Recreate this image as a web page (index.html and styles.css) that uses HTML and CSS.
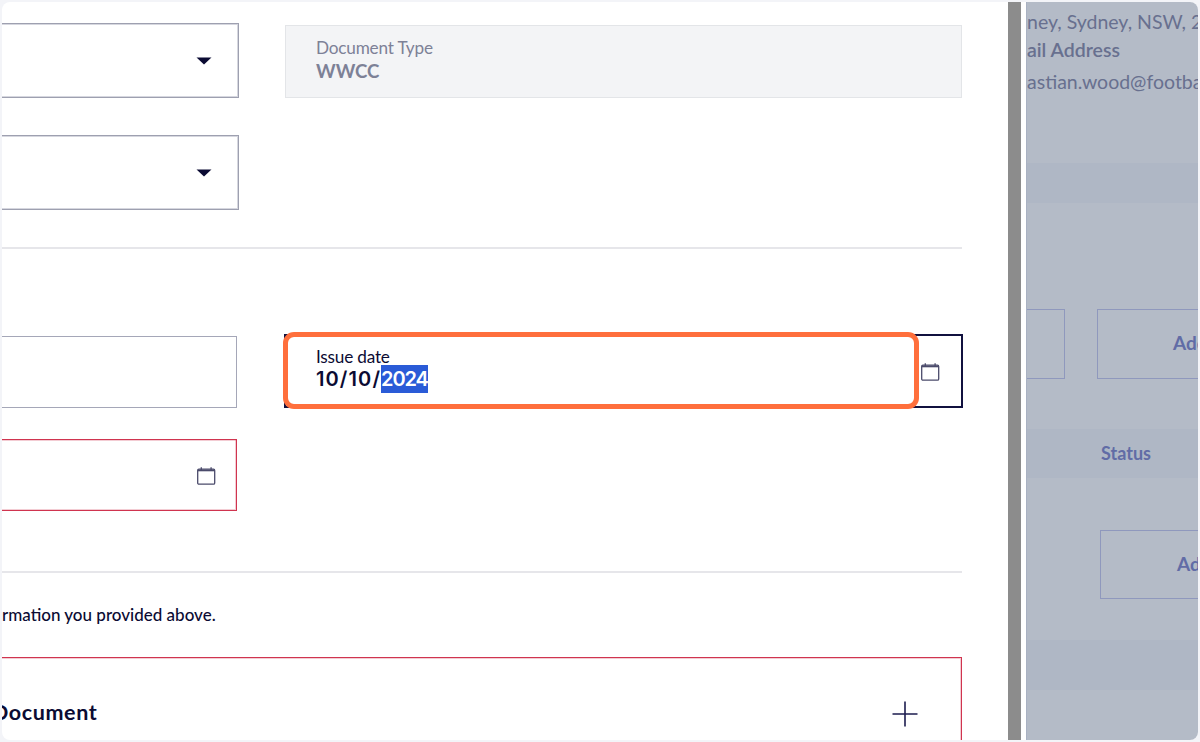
FILE: index.html
```html
<!DOCTYPE html>
<html lang="en">
<head>
<meta charset="utf-8">
<title>Document form</title>
<link rel="stylesheet" href="styles.css">
</head>
<body>
<div class="window">
  <main class="main">
    <section class="grid grid-top">
      <div class="field select">
        <svg class="caret" width="16" height="8" viewBox="0 0 16 8"><path d="M0.5 0.5H15.5L8 7.5Z" fill="#0b0b33"/></svg>
      </div>
      <div class="field readonly">
        <span class="label">Document Type</span>
        <span class="value">WWCC</span>
      </div>
      <div class="field select second">
        <svg class="caret" width="16" height="8" viewBox="0 0 16 8"><path d="M0.5 0.5H15.5L8 7.5Z" fill="#0b0b33"/></svg>
      </div>
    </section>
    <hr class="rule rule-one">
    <section class="grid grid-dates">
      <div class="field plain"></div>
      <div class="field focused">
        <div class="stack">
          <span class="label dark">Issue date</span>
          <span class="date">10/10/<mark class="sel">2024</mark></span>
        </div>
        <svg class="cal" width="20" height="20" viewBox="0 0 20 20" fill="none" stroke="#4b4b6b" stroke-width="1.3"><rect x="1.7" y="3.2" width="17" height="15" rx="1.2"/><path d="M1.7 4.4H18.7" stroke-width="1.8"/><path d="M5.3 1.2V4.4M15.1 1.2V4.4"/></svg>
        <div class="highlight"></div>
      </div>
      <div class="field error">
        <svg class="cal" width="20" height="20" viewBox="0 0 20 20" fill="none" stroke="#4b4b6b" stroke-width="1.3"><rect x="1.7" y="3.2" width="17" height="15" rx="1.2"/><path d="M1.7 4.4H18.7" stroke-width="1.8"/><path d="M5.3 1.2V4.4M15.1 1.2V4.4"/></svg>
      </div>
    </section>
    <hr class="rule rule-two">
    <p class="note">rmation you provided above.</p>
    <section class="upload">
      <span class="upload-title">Document</span>
      <svg class="plus" width="28" height="28" viewBox="0 0 28 28" stroke="#1d1d4f" stroke-width="1.6"><path d="M14 1.5V26.5M1.5 14H26.5"/></svg>
    </section>
  </main>
  <div class="gutter"><div class="thumb"></div></div>
  <aside class="aside">
    <div class="address">ney, Sydney, NSW, 2000</div>
    <div class="addr-label">ail Address</div>
    <div class="email">astian.wood@football.com</div>
    <div class="band band-top"></div>
    <div class="btn-row">
      <div class="ghost ghost-left"></div>
      <div class="ghost ghost-right">Add</div>
    </div>
    <div class="band-head"><span class="status">Status</span></div>
    <div class="ghost ghost-low">Add</div>
    <div class="band band-low"></div>
  </aside>
</div>
</body>
</html>
```
FILE: styles.css
```css
* { box-sizing: border-box; }
html, body { margin: 0; height: 100%; }
body {
  background: #f3f4f8;
  padding: 2px;
  font-family: "Lato", "Liberation Sans", sans-serif;
  color: #0b0b33;
  overflow: hidden;
}
.window {
  display: flex;
  height: 738px;
  background: #fff;
  border-radius: 8px;
  overflow: hidden;
}
.main {
  width: 1004px;
  flex: none;
  padding-right: 44px;
  overflow: hidden;
}
.grid {
  display: grid;
  grid-template-columns: 237px 1fr;
  column-gap: 46px;
}
.grid-top { padding-top: 21px; }
.grid-dates { padding-top: 87px; row-gap: 31px; }
.field {
  position: relative;
  display: flex;
  align-items: center;
  height: 75px;
  border: 1px solid #a5a7b8;
  border-left: 0;
}
.select {
  justify-content: flex-end;
  padding-right: 26px;
  border-color: #9ea0b0;
  box-shadow: inset -1px -1px 0 #d6d7df, inset 0 1px 0 #d6d7df;
}
.second { margin-top: 37px; }
.readonly {
  flex-direction: column;
  align-items: flex-start;
  justify-content: flex-start;
  height: 73px;
  margin-top: 2px;
  padding: 12px 0 0 30px;
  background: #f3f4f6;
  border: 1px solid #e3e5e8;
}
.label { font-size: 17.2px; line-height: 19px; letter-spacing: -0.2px; color: #7d8197; }
.label.dark { color: #0b0b33; line-height: 16px; }
.value { margin-top: 2px; font-size: 18.7px; line-height: 24px; font-weight: 700; color: #7d8197; }
.rule { height: 2px; margin: 0; border: 0; background: #e6e6ea; }
.rule-one { margin-top: 37px; }
.rule-two { margin-top: 60px; }
.plain { height: 72px; width: 235px; }
.focused {
  height: 74px;
  padding: 0 21px 0 30px;
  justify-content: space-between;
  border: 2px solid #11113f;
  margin: -2px -1px 0;
}
.stack { display: flex; flex-direction: column; margin-top: -2px; }
.date {
  margin-top: 2px;
  font-size: 20px;
  line-height: 24px;
  font-weight: 600;
  font-family: "Inter", "Liberation Sans", sans-serif;
  letter-spacing: 1.1px;
  color: #0b0b33;
}
.sel {
  padding: 2px 0;
  background: #2a5bd7;
  color: #fff;
  letter-spacing: -1.1px;
}
.highlight {
  position: absolute;
  left: -3px;
  top: -4px;
  width: 636px;
  height: 77px;
  border: 5px solid #ff6f3c;
  border-radius: 11px;
}
.error {
  height: 72px;
  width: 235px;
  justify-content: flex-end;
  padding-right: 20px;
  border-color: #d0344f;
  box-shadow: inset -1px -1px 0 rgba(208, 52, 79, 0.25), inset 0 1px 0 rgba(208, 52, 79, 0.25);
}
.cal { flex: none; margin-top: 1px; }
.note {
  margin: 31px 0 0;
  font-size: 17px;
  line-height: 22px;
  font-weight: 500;
  color: #0b0b33;
}
.upload {
  display: flex;
  justify-content: space-between;
  align-items: center;
  height: 110px;
  margin-top: 31px;
  padding: 0 42px 0 0;
  border: 1px solid #d0344f;
  border-left: 0;
  border-bottom: 0;
  box-shadow: inset -1px 1px 0 rgba(208, 52, 79, 0.25);
}
.upload-title { margin: 0 0 2px -10px; font-size: 21.5px; letter-spacing: 0.6px; font-weight: 700; }
.plus { margin-top: 2px; }
.gutter { width: 20px; flex: none; padding: 0 5px 0 2px; background: #fff; }
.thumb { height: 100%; background: #8c8c8c; }
.aside {
  flex: 1;
  min-width: 0;
  background: #b4bbc7;
  border-left: 1px solid #a9b1c2;
  overflow: hidden;
  white-space: nowrap;
  color: #68708f;
}
.address { padding-top: 8px; font-size: 19.5px; line-height: 24px; }
.addr-label { margin-top: 4px; font-size: 19.5px; line-height: 24px; font-weight: 600; }
.email { margin-top: 8px; font-size: 19.5px; line-height: 24px; }
.band { background: #afb7c5; }
.band-top { height: 40px; margin-top: 69px; }
.btn-row { display: flex; margin-top: 106px; }
.ghost {
  flex: none;
  height: 70px;
  border: 1px solid #8f98bd;
  font-size: 19px;
  font-weight: 700;
  color: #616ca6;
}
.ghost-left { width: 38px; border-left: 0; }
.ghost-right { width: 120px; margin-left: 32px; padding: 21px 0 0 75px; }
.band-head {
  height: 49px;
  margin-top: 50px;
  padding: 13px 0 0 74px;
  background: #afb7c5;
}
.status { font-size: 18px; font-weight: 700; color: #616ca6; }
.ghost-low { width: 120px; height: 69px; margin: 52px 0 0 73px; padding: 21px 0 0 76px; }
.band-low { height: 50px; margin-top: 41px; }
```
